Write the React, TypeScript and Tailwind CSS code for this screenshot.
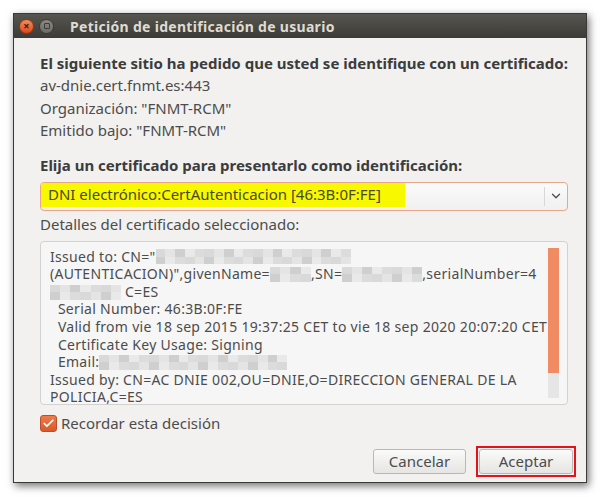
import { Check, ChevronDown } from 'lucide-react';

const font = { fontFamily: '"Noto Sans", "DejaVu Sans", sans-serif' };

function Blur({ w }: { w: number }) {
  // pixelated blur block (redacted data)
  const cells = Math.max(1, Math.round(w / 10));
  const shades = ['bg-[#d9d9d9]', 'bg-[#e4e4e4]', 'bg-[#cfcfcf]', 'bg-[#e9e9e9]', 'bg-[#dcdcdc]'];
  return (
    <span className="inline-flex h-[15px] align-middle -mt-[2px]" style={{ width: w }}>
      {Array.from({ length: cells }).map((_, i) => (
        <span key={i} className="flex-1 flex flex-col">
          <span className={`flex-1 ${shades[i % 5]}`} />
          <span className={`flex-1 ${shades[(i + 2) % 5]}`} />
        </span>
      ))}
    </span>
  );
}

export default function App() {
  return (
    <div className="w-[600px] h-[497px] bg-white pt-[13px] pl-[13px]" style={font}>
      <div className="w-[574px] h-[470px] flex flex-col border border-[#3a3935] shadow-[2px_3px_8px_rgba(0,0,0,0.55)] bg-[#f2f1f0]">
        {/* Title bar */}
        <div className="h-[24px] flex items-center bg-gradient-to-b from-[#56554f] to-[#3c3b37] pl-[5px] shrink-0">
          <div className="w-[15px] h-[15px] rounded-full bg-gradient-to-b from-[#f58a5a] to-[#dd4814] border border-[#8f3a16] flex items-center justify-center">
            <span className="text-[#3c2016] text-[11px] leading-none font-bold -mt-[1px]">×</span>
          </div>
          <div className="ml-[5px] w-[15px] h-[15px] rounded-full bg-gradient-to-b from-[#8a8983] to-[#6d6c67] border border-[#3a3935] flex items-center justify-center">
            <span className="w-[6px] h-[6px] border border-[#3c3b37] rounded-[1px]" />
          </div>
          <span className="ml-[16px] text-[14px] font-bold text-[#dfdbd2] tracking-[0.3px]">
            Petición de identificación de usuario
          </span>
        </div>

        {/* Body */}
        <div className="flex-1 flex flex-col pt-[14px] pl-[26px] pr-[18px] pb-[10px] text-[15px] text-[#4c4c4c]">
          <p className="leading-[22.4px] font-bold text-[#3c3c3c] whitespace-nowrap">
            El siguiente sitio ha pedido que usted se identifique con un certificado:
          </p>
          <p className="leading-[22.4px]">av-dnie.cert.fnmt.es:443</p>
          <p className="leading-[22.4px]">Organización: "FNMT-RCM"</p>
          <p className="leading-[22.4px]">Emitido bajo: "FNMT-RCM"</p>

          <p className="mt-[12px] leading-[22px] font-bold text-[#3c3c3c]">
            Elija un certificado para presentarlo como identificación:
          </p>

          <div className="mt-[6px] h-[29px] flex items-stretch rounded-[4px] border border-[#eaa68a] bg-gradient-to-b from-[#fbfbfb] to-[#f0f0f0] overflow-hidden">
            <div className="flex-1 flex items-start">
              <span className="h-[24px] flex items-center bg-[#f8f800] pl-[7px] pr-[24px] text-[#4a4a20] whitespace-nowrap">
                DNI electrónico:CertAutenticacion [46:3B:0F:FE]
              </span>
            </div>
            <div className="my-[4px] w-px bg-[#d8d8d8]" />
            <div className="w-[22px] flex items-center justify-center text-[#4c4c4c]">
              <ChevronDown size={14} strokeWidth={2.2} />
            </div>
          </div>

          <p className="mt-[2px] leading-[22px]">Detalles del certificado seleccionado:</p>

          <div className="mt-[6px] h-[164px] flex rounded-[4px] border border-[#d3d2cf] bg-[#f6f6f6] overflow-hidden">
            <div className="flex-1 pl-[9px] pt-[6px] text-[14px] tracking-[0.3px] leading-[17.6px] whitespace-pre overflow-hidden">
              <div>Issued to: CN="<Blur w={195} /></div>
              <div>
                (AUTENTICACION)",givenName=<Blur w={41} />,SN=<Blur w={80} />,serialNumber=4
              </div>
              <div>
                <Blur w={71} />
                {' '}C=ES
              </div>
              <div>  Serial Number: 46:3B:0F:FE</div>
              <div>  Valid from vie 18 sep 2015 19:37:25 CET to vie 18 sep 2020 20:07:20 CET</div>
              <div>  Certificate Key Usage: Signing</div>
              <div>
                {'  '}Email:<Blur w={188} />
              </div>
              <div>Issued by: CN=AC DNIE 002,OU=DNIE,O=DIRECCION GENERAL DE LA</div>
              <div>POLICIA,C=ES</div>
            </div>
            <div className="w-[11px] mr-[8px] my-[6px] flex flex-col bg-[#e6e6e6] shrink-0">
              <div className="h-[125px] bg-[#f08b63]" />
            </div>
          </div>

          <label className="mt-[9px] h-[20px] flex items-center">
            <span className="w-[17px] h-[17px] rounded-[3px] bg-gradient-to-b from-[#ee7a4a] to-[#d9582a] border border-[#b8502a] flex items-center justify-center">
              <Check size={13} strokeWidth={3.2} className="text-white" />
            </span>
            <span className="ml-[4px]">Recordar esta decisión</span>
          </label>

          <div className="mt-[12px] -mr-[8px] flex justify-end items-center gap-[10px]">
            <button className="w-[93px] h-[25px] rounded-[3px] border border-[#b9b8b4] bg-gradient-to-b from-[#fafafa] to-[#e6e5e3] text-[15px] text-[#4c4c4c]">
              Cancelar
            </button>
            <span className="border-2 border-[#e2131c] p-px">
              <button className="block w-[94px] h-[25px] rounded-[3px] border border-[#b9b8b4] bg-gradient-to-b from-[#fafafa] to-[#e6e5e3] text-[15px] text-[#4c4c4c]">
                Aceptar
              </button>
            </span>
          </div>
        </div>
      </div>
    </div>
  );
}
